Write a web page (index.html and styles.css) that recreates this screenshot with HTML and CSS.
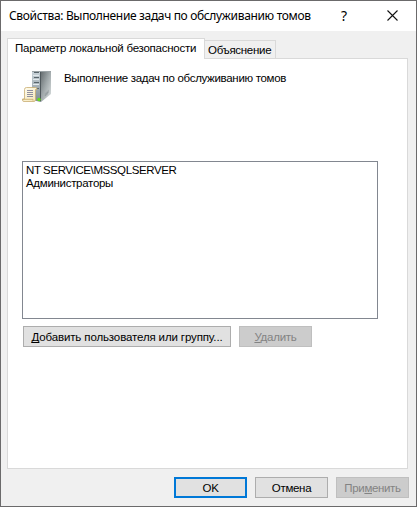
FILE: index.html
```
<!DOCTYPE html>
<html lang="ru">
<head>
<meta charset="utf-8">
<title>Свойства</title>
<link rel="stylesheet" href="styles.css">
</head>
<body>
<main class="window">
  <header class="titlebar">
    <h1 class="title">Свойства: Выполнение задач по обслуживанию томов</h1>
    <span class="help">?</span>
    <svg class="close" width="11" height="11" viewBox="0 0 11 11"><path d="M.5.5l10 10M10.500.5l-10 10" fill="none" stroke="#111" stroke-width="1.1"/></svg>
  </header>
  <nav class="tabs">
    <div class="tab active"><span class="t-param">Параметр локальной безопасности</span></div>
    <div class="tab"><span class="t-expl">Объяснение</span></div>
  </nav>
  <section class="panel">
    <div class="intro">
      <svg class="icon" width="30" height="32" viewBox="0 0 30 32">
        <defs>
          <linearGradient id="side" x1="0" y1="0" x2="1" y2="1"><stop offset="0" stop-color="#666d70"/><stop offset=".45" stop-color="#a0a8aa"/><stop offset="1" stop-color="#e0e5e5"/></linearGradient>
          <linearGradient id="front" x1="0" y1="0" x2="0" y2="1"><stop offset="0" stop-color="#c8d2d8"/><stop offset="1" stop-color="#7d898f"/></linearGradient>
          <linearGradient id="paper" x1="0" y1="0" x2="1" y2="1"><stop offset="0" stop-color="#fffef3"/><stop offset="1" stop-color="#f5e5b5"/></linearGradient>
        </defs>
        <path d="M10 0h19v2H10z" fill="#9ba3a6"/>
        <path d="M10 1h9v30l-9-2z" fill="url(#front)"/>
        <path d="M19 1h10v22l-10 8z" fill="url(#side)"/>
        <path d="M12 1.500h5M12 6.500h5M12 11.500h5M12 17.500h5" stroke="#59656b"/>
        <path d="M11 4.500h6M11 8.500h6M11 13.500h6" stroke="#e1e8eb"/>
        <path d="M18.500 1v29" stroke="#4f585c"/>
        <path d="M22 25.500l5-4v-3l-5 4z" fill="#a7aeb0"/>
        <path d="M23 23.500l3-2.500M23 25l3-2.500" stroke="#858e90" stroke-width=".6"/>
        <circle cx="17" cy="28.500" r="1.700" fill="#66dc1c"/>
        <path d="M2.500 18.500q0-2 2-2h9q1.500 0 1.500 2h-1.500v10q0 2-1.500 2H2q-1.500 0-1.500-1.500v-1h2z" fill="url(#paper)" stroke="#c9ad72" stroke-width=".8"/>
        <path d="M.7 28.300H11v1.400" fill="none" stroke="#c7a864" stroke-width=".8"/>
        <path d="M5 19.500h6M5 21.500h6M5 23.500h6M5 25.500h6" stroke="#85859b" stroke-width=".9"/>
      </svg>
      <span class="policy">Выполнение задач по обслуживанию томов</span>
    </div>
    <div class="list">
      <div class="row"><span class="r-service">NT SERVICE\MSSQLSERVER</span></div>
      <div class="row"><span class="r-admin">Администраторы</span></div>
    </div>
    <div class="actions">
      <button class="btn add"><span class="b-add"><u>Д</u>обавить пользователя или группу...</span></button>
      <button class="btn" disabled><span class="b-remove"><u>У</u>далить</span></button>
    </div>
  </section>
  <footer class="footer">
    <button class="btn default"><span class="b-ok">OK</span></button>
    <button class="btn"><span class="b-cancel">Отмена</span></button>
    <button class="btn" disabled><span class="b-apply">При<u>м</u>енить</span></button>
  </footer>
</main>
</body>
</html>
```
FILE: styles.css
```
* { box-sizing: border-box; }
body { margin: 0; font: 11.5px/13px "Liberation Sans", sans-serif; color: #000; }
.window { width: 417px; height: 507px; border: 1px solid #6b6a6b; background: #f0f0f0; display: flex; flex-direction: column; }
.titlebar { height: 30px; flex: none; background: #fff; display: flex; align-items: center; padding: 0 18px 1px 8px; }
.title { margin: 1px 0 0; flex: 1; font: 12px/16px "Noto Sans", sans-serif; white-space: nowrap; letter-spacing: -0.34px; }
.help { font: 14px/16px "Noto Sans", sans-serif; width: 9px; margin-right: 38px; padding-left: 1px; }
.close { display: block; margin-bottom: 1px; }
.tabs { display: flex; align-items: flex-end; height: 27px; flex: none; padding-left: 6px; }
.tab { height: 18px; border: 1px solid #d9d9d9; border-bottom: 0; border-left: 0; background: #f0f0f0; width: 71px; padding: 3px 0 0 3px; white-space: nowrap; }
.tab.active { height: 21px; margin-bottom: -1px; border-left: 1px solid #d9d9d9; background: #fff; width: 198px; padding: 3px 0 0 7px; z-index: 1; }
.panel { margin: 0 8px 0 6px; height: 411px; flex: none; background: #fff; border: 1px solid #d9d9d9; padding: 12px 29px 0 14px; }
.intro { display: flex; height: 90px; }
.icon { flex: none; margin-right: 12px; }
.policy { white-space: nowrap; height: 13px; margin-top: 1px; letter-spacing: -0.31px; }
.list { height: 158px; border: 1px solid #828790; padding: 2px 3px; }
.row { height: 13px; white-space: nowrap; }
.actions { display: flex; gap: 8px; padding: 7px 0 0 1px; }
.btn { width: 73px; height: 21px; padding: 2px 0 0; font: inherit; color: #000; background: #e1e1e1; border: 1px solid #adadad; border-radius: 0; white-space: nowrap; }
.btn:disabled { color: #838383; background: #ccc; border-color: #bfbfbf; }
.btn.default { border: 2px solid #0078d7; }
.btn.add { width: 208px; }
.footer { display: flex; justify-content: flex-end; gap: 8px; padding: 8px 7px 0 0; }
u { text-decoration-skip-ink: none; text-decoration-thickness: 1px; text-underline-offset: 1px; }
.t-param { letter-spacing: -0.25px; }
.t-expl, .r-admin, .b-ok, .b-cancel { letter-spacing: -0.3px; }
.r-service { letter-spacing: -0.4px; }
.b-add { letter-spacing: -0.13px; }
.b-remove { letter-spacing: -0.25px; }
.b-apply { letter-spacing: -0.35px; }
```
